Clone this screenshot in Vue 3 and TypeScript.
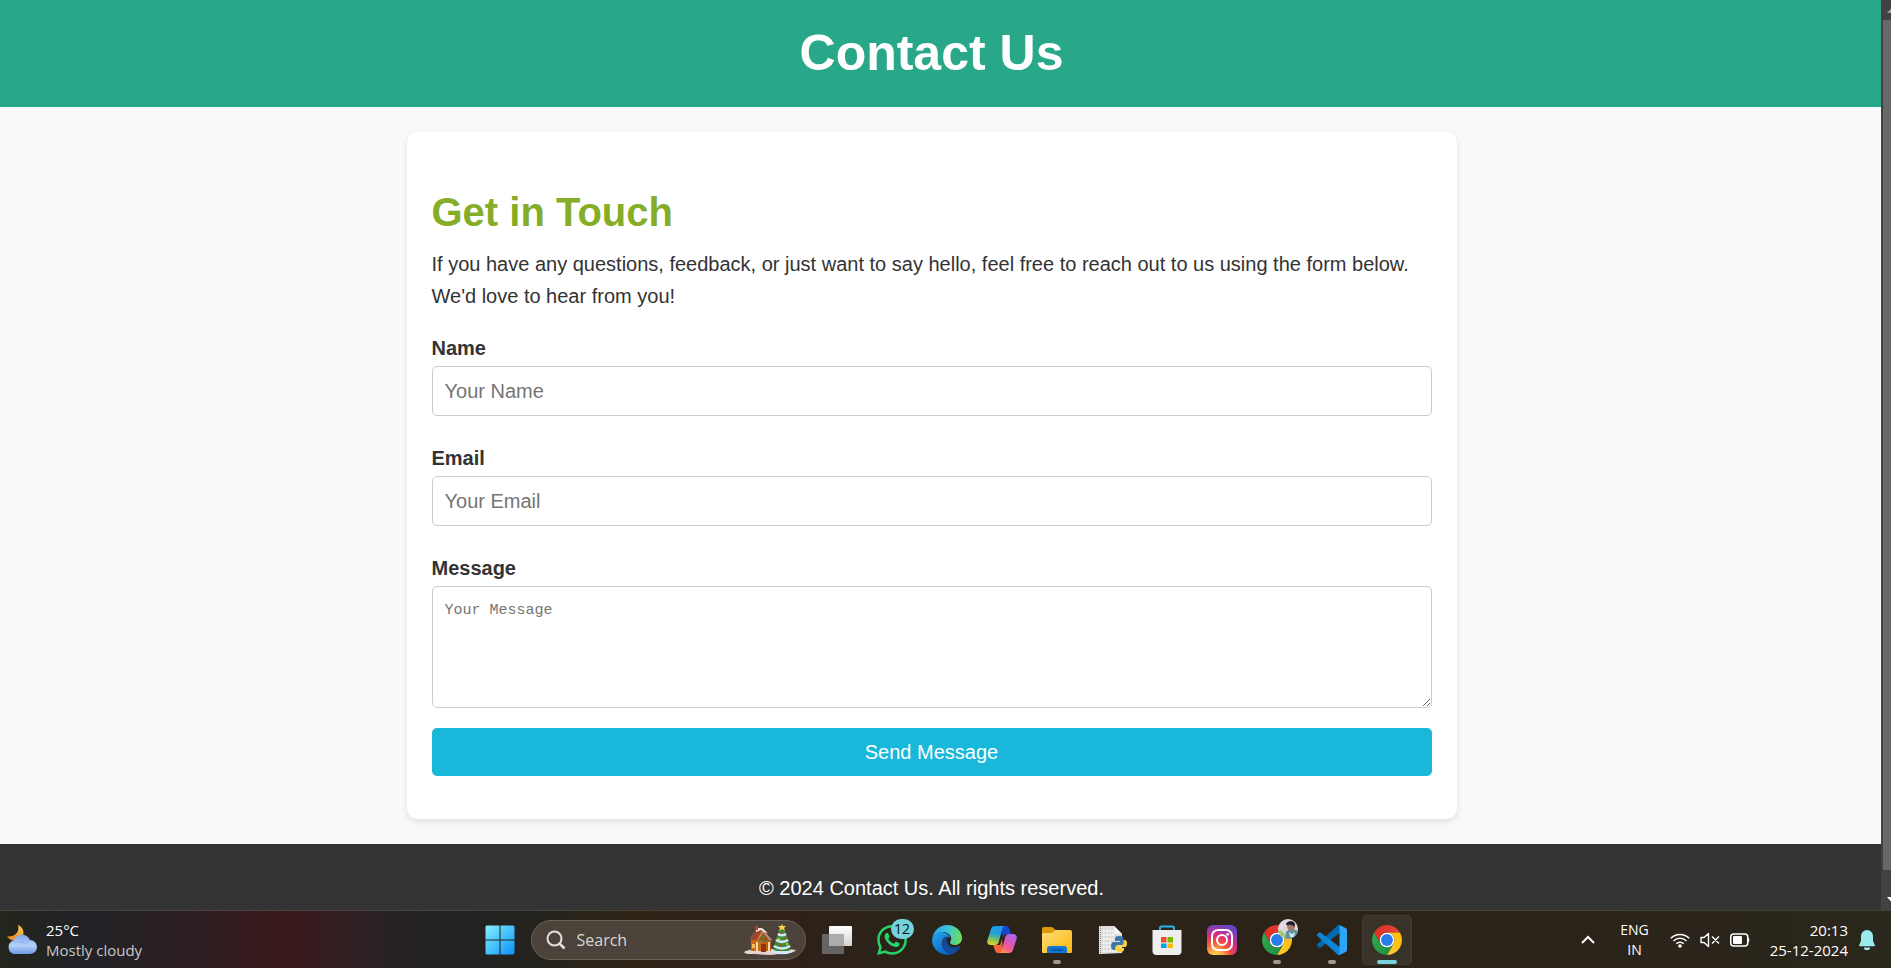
<script setup lang="ts">
import { ref } from 'vue'

const name = ref('')
const email = ref('')
const message = ref('')
const query = ref('')
</script>

<template>
  <div class="desktop">
    <div class="browser">
      <div class="page">
        <header class="page-header">
          <h1>Contact Us</h1>
        </header>

        <main class="content">
          <section class="card">
            <h2>Get in Touch</h2>
            <p class="intro">
              If you have any questions, feedback, or just want to say hello, feel free to reach out to us using the form
              below. We'd love to hear from you!
            </p>
            <form @submit.prevent>
              <div class="field">
                <label for="name">Name</label>
                <input id="name" v-model="name" type="text" placeholder="Your Name" />
              </div>
              <div class="field">
                <label for="email">Email</label>
                <input id="email" v-model="email" type="email" placeholder="Your Email" />
              </div>
              <div class="field">
                <label for="message">Message</label>
                <textarea id="message" v-model="message" placeholder="Your Message"></textarea>
              </div>
              <button class="send" type="submit">Send Message</button>
            </form>
          </section>
        </main>

        <footer class="page-footer">
          <p>© 2024 Contact Us. All rights reserved.</p>
        </footer>
      </div>

      <div class="scrollbar" aria-hidden="true">
        <svg class="arrow" viewBox="0 0 10 20"><path d="M10 8.5v4.500H6z" fill="#9a9a9a" /></svg>
        <div class="thumb"></div>
        <svg class="arrow" viewBox="0 0 10 20"><path d="M6 7h4v4.500z" fill="#fff" /></svg>
      </div>
    </div>

    <nav class="taskbar" aria-label="Taskbar">
      <button class="weather" type="button">
        <svg width="32" height="32" viewBox="0 0 32 32" aria-hidden="true">
          <defs>
            <linearGradient id="moon" x1="1" y1="0" x2="0" y2="1">
              <stop offset="0" stop-color="#f8ce4c" /><stop offset="1" stop-color="#ee7a1b" />
            </linearGradient>
            <linearGradient id="cloud" x1="0" y1="0" x2="0" y2="1">
              <stop offset="0" stop-color="#7fa6ea" /><stop offset=".55" stop-color="#b4cff8" />
              <stop offset="1" stop-color="#6c9ae8" />
            </linearGradient>
          </defs>
          <path d="M12 1c6 2.500 7 9 3.500 13-4 4.500-11 3.500-14.500-1.500C9 13 14 8 12 1z" fill="url(#moon)" />
          <path d="M8 30a7 7 0 0 1-.5-13.500A9 9 0 0 1 24 16a7 7 0 0 1 0 14z" fill="url(#cloud)" />
          <path d="M12.500 18.500c4-1 6 .5 7 2 1-2 3-3.500 5.500-3.500" fill="none" stroke="#8db2f0" />
        </svg>
        <span class="lines"><span class="bright">25°C</span><span>Mostly cloudy</span></span>
      </button>

      <div class="apps">
        <button class="app" type="button" aria-label="Start">
          <svg width="30" height="30" viewBox="0 0 30 30">
            <defs>
              <linearGradient id="win" x1="0" y1="0" x2="1" y2="1">
                <stop offset="0" stop-color="#86f0ff" /><stop offset=".5" stop-color="#46c2fa" />
                <stop offset="1" stop-color="#0a90fa" />
              </linearGradient>
            </defs>
            <path
              d="M2 .5h12.500v14H.5V2A1.500 1.500 0 0 1 2 .5zM15.500.5H28A1.500 1.500 0 0 1 29.500 2v12.500h-14zM.5 15.500h14v14H2A1.500 1.500 0 0 1 .5 28zM15.500 15.500h14V28a1.500 1.500 0 0 1-1.500 1.500H15.500z"
              fill="url(#win)"
            />
          </svg>
        </button>

        <label class="search">
          <svg width="20" height="20" viewBox="0 0 20 20" fill="none" stroke="#e2e0de" stroke-width="2">
            <circle cx="8.500" cy="8.500" r="7" /><path d="M13.500 13.500 18.500 18.500" stroke-width="2.500" />
          </svg>
          <input v-model="query" type="search" placeholder="Search" aria-label="Search" />
          <svg width="54" height="32" viewBox="0 0 54 32" aria-hidden="true">
            <path d="M1 28c5-3 9-2 12-3h25c5 1 10 0 15 1-2 4-13 2-18 4-8 2-18 0-25 0-5 0-8 0-9-2z" fill="#e6d3d1" />
            <path d="M8 14 18 4l10 11v12H8z" fill="#a8480f" />
            <path d="M8 16h11v11H8z" fill="#cc6a18" />
            <path d="M19 17h9v10h-9z" fill="#c05c14" />
            <path d="M6 15 14 4l4 1-8 11z" fill="#8a4a3c" />
            <path d="M14 16 20 5l9 11-2 1-7-8-5 8z" fill="#b98779" />
            <path d="m13 4 6 0 6 5-4-1-3-2-5 2z" fill="#f2e3df" />
            <path d="M12 2h3v4h-3z" fill="#c8371d" />
            <path d="M20 11v4m-2-2h4M15 17h12" stroke="#369154" stroke-width="1" />
            <path d="M14 18v10m12-10v10" stroke="#f5d9b6" stroke-width="2" />
            <path d="M18 20h5v8h-5z" fill="#8a3a0d" />
            <path d="M9 20h3v4H9z" fill="#ffba54" />
            <path d="m39 3 5 7-1 1 3 5-1 1 3 6-1 1 1 3H30l1-3-1-1 3-6-1-1 3-5-1-1z" fill="#3c8b3a" />
            <path d="M35 10c3 2 5 2 8 0M33 16c4 2.500 8 2.500 12 0M31 22c5 3 11 3 16 0M29 27c6 2.500 14 2.500 20 0" fill="none" stroke="#d8e6fa" stroke-width="2.500" />
            <path d="m39 0 1 2h3l-2 2 1 3-3-2-3 2 1-3-2-2h3z" fill="#ffd04a" />
            <circle cx="38" cy="9" r="1" fill="#e5352b" /><circle cx="42" cy="14" r="1" fill="#e5352b" />
            <circle cx="36" cy="15" r="1" fill="#ffcf3d" /><circle cx="37" cy="21" r="1" fill="#e5352b" />
            <circle cx="44" cy="20" r="1" fill="#ffcf3d" />
          </svg>
        </label>

        <div class="tasks">
          <button class="app" type="button" aria-label="Task view">
            <svg width="30" height="30" viewBox="0 0 30 30">
              <defs>
                <linearGradient id="tv" x1="0" y1="0" x2="0" y2="1">
                  <stop offset="0" stop-color="#fff" /><stop offset="1" stop-color="#d2d2d2" />
                </linearGradient>
              </defs>
              <rect y="9" width="22" height="20" rx="1" fill="#666462" />
              <rect x="7" y="1" width="23" height="20" rx="1" fill="url(#tv)" />
              <path d="M7 9h15v12H8a1 1 0 0 1-1-1z" fill="#acacac" />
            </svg>
          </button>

          <button class="app" type="button" aria-label="WhatsApp, 12 notifications">
            <svg width="30" height="30" viewBox="0 0 24 24">
              <path
                fill="#25d366"
                d="M17.472 14.382c-.297-.149-1.758-.867-2.03-.967-.273-.099-.471-.148-.67.15-.197.297-.767.966-.94 1.164-.173.199-.347.223-.644.075-.297-.15-1.255-.463-2.39-1.475-.883-.788-1.480-1.761-1.653-2.059-.173-.297-.018-.458.13-.606.134-.133.298-.347.446-.52.149-.174.198-.298.298-.497.099-.198.05-.371-.025-.52-.075-.149-.669-1.612-.916-2.207-.242-.579-.487-.5-.669-.51-.173-.008-.371-.01-.57-.01-.198 0-.52.074-.792.372-.272.297-1.040 1.016-1.040 2.479 0 1.462 1.065 2.875 1.213 3.074.149.198 2.096 3.200 5.077 4.487.709.306 1.262.489 1.694.625.712.227 1.360.195 1.871.118.571-.085 1.758-.719 2.006-1.413.248-.694.248-1.289.173-1.413-.074-.124-.272-.198-.57-.347m-5.421 7.403h-.004a9.870 9.870 0 0 1-5.031-1.378l-.361-.214-3.741.982.998-3.648-.235-.374a9.860 9.860 0 0 1-1.510-5.260c.001-5.450 4.436-9.884 9.888-9.884 2.640 0 5.122 1.030 6.988 2.898a9.825 9.825 0 0 1 2.893 6.994c-.003 5.450-4.437 9.884-9.885 9.884m8.413-18.297A11.815 11.815 0 0 0 12.050 0C5.495 0 .16 5.335.157 11.892c0 2.096.547 4.142 1.588 5.945L.057 24l6.305-1.654a11.882 11.882 0 0 0 5.683 1.448h.005c6.554 0 11.890-5.335 11.893-11.893a11.821 11.821 0 0 0-3.480-8.413z"
              />
            </svg>
            <span class="badge">12</span>
          </button>

          <button class="app" type="button" aria-label="Edge">
            <svg width="30" height="30" viewBox="0 0 30 30">
              <defs>
                <linearGradient id="edgeTop" x1="0" y1=".4" x2="1" y2=".5">
                  <stop offset="0" stop-color="#2d9fe6" /><stop offset=".5" stop-color="#38c5d8" />
                  <stop offset="1" stop-color="#6fe052" />
                </linearGradient>
                <linearGradient id="edgeLeft" x1="0" y1="0" x2=".6" y2="1">
                  <stop offset="0" stop-color="#2aa5ec" /><stop offset="1" stop-color="#0968c8" />
                </linearGradient>
              </defs>
              <path
                d="M.5 12C2 5 8 0 15 0c9 0 15 6.500 15 13 0 4.500-3.500 7-7 7-3 0-5-1.200-5-2.500 0-1 1.200-1.500 1.200-4C19 9 14 6.500 9.500 7 5 7.500 2 9.500.5 12z"
                fill="url(#edgeTop)"
              />
              <path
                d="M0 15C.5 9 5 6.500 10 7c4 .4 7.500 3 8.500 6-2-2-6.500-2-8 2-2 6 2 12.500 9.500 14C10 32 0 25 0 15z"
                fill="url(#edgeLeft)"
              />
              <path
                d="M10.500 15c1-2.500 3-3.500 5.500-3-2 2-2 5 0 7.500 3 3.500 7.500 3.500 11.500 1.500 1 0 1.200.6.8 1.200C25.500 27 22 29 19 29.500 13 28.500 8.500 21.500 10.500 15z"
                fill="#114a96"
              />
            </svg>
          </button>

          <button class="app" type="button" aria-label="Copilot">
            <svg width="30" height="30" viewBox="0 0 30 30">
              <defs>
                <linearGradient id="copA" x1=".4" y1="0" x2=".2" y2="1">
                  <stop offset="0" stop-color="#1998ee" /><stop offset=".4" stop-color="#22a5d8" />
                  <stop offset=".7" stop-color="#7cc45a" /><stop offset="1" stop-color="#f5d02c" />
                </linearGradient>
                <linearGradient id="copB" x1=".8" y1="0" x2=".2" y2="1">
                  <stop offset="0" stop-color="#a56bf0" /><stop offset=".45" stop-color="#dd55b8" />
                  <stop offset=".75" stop-color="#fa6080" /><stop offset="1" stop-color="#ff9c58" />
                </linearGradient>
              </defs>
              <path d="M14 1h5c2 0 3 1 3.500 3L24 9h-4c-3 0-3 2-4 4z" fill="#1747d0" />
              <path d="M6 20h7l2-6 1 14h-5c-2 0-2.500-1-3-3z" fill="#f4643a" />
              <path
                d="M8 1h10c-2 .5-2.600 2-3 4l-3 11c-.6 2.500-1.500 4-4 4H4c-3 0-4.500-2-3.500-5L4 4c.6-2 2-3 4-3z"
                fill="url(#copA)"
              />
              <path
                d="M22 28H12c2-.5 2.600-2 3-4l3-11c.6-2.500 1.500-4 4-4h4c3 0 4.500 2 3.500 5L26 25c-.6 2-2 3-4 3z"
                fill="url(#copB)"
              />
            </svg>
          </button>

          <button class="app" type="button" aria-label="File Explorer">
            <svg width="30" height="30" viewBox="0 0 30 30">
              <defs>
                <linearGradient id="folder" x1="0" y1="0" x2="1" y2="1">
                  <stop offset="0" stop-color="#ffde7a" /><stop offset="1" stop-color="#f9b80a" />
                </linearGradient>
              </defs>
              <path d="M0 4a2 2 0 0 1 2-2h7q1.500 0 2.500 1l2 2v6H0z" fill="#dd9a08" />
              <path d="M0 8h9q1.500 0 2.500-1L13 5h15a2 2 0 0 1 2 2v20a1 1 0 0 1-1 1H1a1 1 0 0 1-1-1z" fill="url(#folder)" />
              <path d="M5 28v-4a3 3 0 0 1 3-3h14a3 3 0 0 1 3 3v4z" fill="#1177d2" />
              <path d="M9 25h12" stroke="#0b4d96" stroke-width="1.500" />
            </svg>
            <span class="mark"></span>
          </button>

          <button class="app" type="button" aria-label="Python">
            <svg width="30" height="30" viewBox="0 0 30 30">
              <path d="M2 1h15l8 8v19l-21 1H2z" fill="#dedede" />
              <path d="M17 1v8h8z" fill="#f7f7f7" />
              <path d="M3.500 1v28" stroke="#888" stroke-dasharray="1 1" />
              <path d="M6 6h10M6 10h12M6 14h10M6 18h8M6 22h10M6 26h14" stroke="#f6f6f6" stroke-width="2" stroke-dasharray="2 1" />
              <path
                d="M22 11c-3 0-4 1-4 2.500V16h5v1h-6c-2 0-3 1.500-3 4s1 4 3 4h1.500v-2.500c0-1.500 1-2.500 3-2.500H25c1 0 1.500-1 1.500-2v-4.500C26.500 12 25 11 22 11z"
                fill="#3b79ad"
              />
              <path
                d="M23 27c3 0 4-1 4-2.500V23h-5v-1h6c1 0 2-1 2-3.500S29 15 27.500 15H26.500v2.500c0 1.500-1 3-3 3H20c-1 0-1.500 1-1.500 2v2c0 1.500 1.500 2.500 4.500 2.500z"
                fill="#ffd23f"
              />
            </svg>
          </button>

          <button class="app" type="button" aria-label="Microsoft Store">
            <svg width="30" height="30" viewBox="0 0 30 30">
              <path d="M8 7V3a1.500 1.500 0 0 1 1.500-1.500h11A1.500 1.500 0 0 1 22 3v4" fill="none" stroke="#27b4ee" stroke-width="2" />
              <path d="M.5 5h29v21a4 4 0 0 1-4 4h-21a4 4 0 0 1-4-4z" fill="#eee" />
              <path d="M9 12h5.500v5.500H9z" fill="#f04f22" /><path d="M15.500 12H21v5.500h-5.500z" fill="#7eb900" />
              <path d="M9 18.500h5.500V23H9z" fill="#00a3ee" /><path d="M15.500 18.500H21V23h-5.500z" fill="#ffb800" />
            </svg>
          </button>

          <button class="app" type="button" aria-label="Instagram">
            <svg width="30" height="30" viewBox="0 0 30 30">
              <defs>
                <radialGradient id="ig" cx=".28" cy="1.050" r="1.100">
                  <stop offset="0" stop-color="#ffdc60" /><stop offset=".2" stop-color="#fcaf45" />
                  <stop offset=".45" stop-color="#f4503c" /><stop offset=".68" stop-color="#cf2d87" />
                  <stop offset="1" stop-color="#6047c8" />
                </radialGradient>
              </defs>
              <rect width="30" height="30" rx="6" fill="url(#ig)" />
              <g fill="none" stroke="#fff" stroke-width="2">
                <rect x="5" y="5" width="20" height="20" rx="6" /><circle cx="15" cy="15" r="5" />
              </g>
              <circle cx="20.700" cy="9.300" r="1.400" fill="#fff" />
            </svg>
          </button>

          <button class="app" type="button" aria-label="Chrome, personal profile">
            <svg width="30" height="30" viewBox="0 0 48 48">
              <defs>
                <linearGradient id="crR" x1="0" y1="0" x2="1" y2="0">
                  <stop offset="0" stop-color="#d93025" /><stop offset="1" stop-color="#ea4335" />
                </linearGradient>
                <linearGradient id="crY" x1="0" y1="1" x2="1" y2="0">
                  <stop offset="0" stop-color="#fcc934" /><stop offset="1" stop-color="#fbbc04" />
                </linearGradient>
                <linearGradient id="crG" x1="1" y1="1" x2="0" y2="0">
                  <stop offset="0" stop-color="#1e8e3e" /><stop offset="1" stop-color="#34a853" />
                </linearGradient>
                <symbol id="chrome" viewBox="0 0 48 48">
                  <circle cx="24" cy="24" r="12" fill="#fff" />
                  <path d="M24 12h20.780a24 24 0 0 0-41.560 0l10.390 18A12 12 0 0 1 24 12z" fill="url(#crR)" />
                  <path d="M34.390 30 24 48a24 24 0 0 0 20.780-36H24a12 12 0 0 1 10.390 18z" fill="url(#crY)" />
                  <path d="M13.610 30 3.220 12A24 24 0 0 0 24 48l10.390-18a12 12 0 0 1-20.780 0z" fill="url(#crG)" />
                  <circle cx="24" cy="24" r="9.500" fill="#2a7bea" />
                </symbol>
              </defs>
              <use href="#chrome" width="48" height="48" />
            </svg>
            <svg class="avatar" width="20" height="20" viewBox="0 0 20 20">
              <clipPath id="face"><circle cx="10" cy="10" r="10" /></clipPath>
              <g clip-path="url(#face)">
                <path d="M0 0h20v20H0z" fill="#dcd9df" />
                <path d="M0 11c4 0 7 2 8 9H0z" fill="#a9c86f" />
                <path d="M8 13c2-3 9-4 12 0v7H7z" fill="#5d93a5" />
                <ellipse cx="13" cy="7" rx="4" ry="5" fill="#a8766a" />
                <path d="M8 6c0-5 9-5 9 0l-1 2c-1-3-4-2-7-2z" fill="#1d1c2c" />
                <path d="m11 13 3 2 3-2-1 5h-4z" fill="#d6e3e4" />
              </g>
            </svg>
            <span class="mark"></span>
          </button>

          <button class="app" type="button" aria-label="Visual Studio Code">
            <svg width="30" height="30" viewBox="0 0 100 100">
              <path
                d="M96.460 10.800 75.860.87a6.230 6.230 0 0 0-7.100 1.200L1.300 63.600a4.170 4.170 0 0 0 0 6.160l5.500 5a4.170 4.170 0 0 0 5.330.24L93.360 13.400c2.720-2.060 6.640-.12 6.640 3.300v-.24a6.250 6.250 0 0 0-3.540-5.630z"
                fill="#0069b0"
              />
              <path
                d="m96.460 89.200-20.600 9.930a6.230 6.230 0 0 1-7.100-1.200L1.300 36.400a4.170 4.170 0 0 1 0-6.160l5.500-5a4.170 4.170 0 0 1 5.330-.24l81.230 61.600c2.720 2.060 6.640.12 6.640-3.300v.24a6.250 6.250 0 0 1-3.540 5.630z"
                fill="#0d85d4"
              />
              <path
                d="M75.860 99.130a6.230 6.230 0 0 1-7.100-1.200c2.300 2.300 6.240.67 6.240-2.580V4.660c0-3.260-3.940-4.900-6.240-2.590a6.230 6.230 0 0 1 7.100-1.200l20.600 9.900A6.250 6.250 0 0 1 100 16.400v67.200c0 2.400-1.370 4.600-3.540 5.640z"
                fill="#2aa6f4"
              />
            </svg>
            <span class="mark"></span>
          </button>

          <button class="app active" type="button" aria-label="Chrome">
            <svg width="30" height="30" viewBox="0 0 48 48"><use href="#chrome" width="48" height="48" /></svg>
            <span class="mark"></span>
          </button>
        </div>
      </div>

      <div class="tray">
        <button class="chevron" type="button" aria-label="Show hidden icons">
          <svg width="16" height="10" viewBox="0 0 16 10" fill="none" stroke="#fff" stroke-width="2">
            <path d="m2 8 6-6 6 6" />
          </svg>
        </button>
        <button class="lines lang" type="button"><span>ENG</span><span>IN</span></button>
        <button class="status" type="button" aria-label="Network, sound and battery">
          <svg width="20" height="16" viewBox="0 0 20 16" fill="none" stroke="#fff" stroke-width="1.500">
            <path d="M.8 6.200a13 13 0 0 1 18.400 0M3.500 9a9.200 9.200 0 0 1 13 0M6.300 11.700a5.200 5.200 0 0 1 7.400 0" />
            <circle cx="10" cy="14" r="1.800" fill="#fff" stroke="none" />
          </svg>
          <svg width="20" height="16" viewBox="0 0 20 16" fill="none" stroke="#fff" stroke-width="1.400">
            <path d="M1 5.500h3L8.500 1.500v13L4 10.500H1zM12 4.500l7 7M19 4.500l-7 7" stroke-linejoin="round" />
          </svg>
          <svg width="20" height="16" viewBox="0 0 20 16">
            <rect x=".75" y="2" width="17" height="12" rx="3" fill="none" stroke="#fff" stroke-width="1.500" />
            <rect x="3" y="4" width="9" height="8" rx="1" fill="#fff" /><path d="M18 6q2 2 0 4z" fill="#fff" stroke="#fff" />
          </svg>
        </button>
        <button class="lines clock" type="button"><span>20:13</span><span>25-12-2024</span></button>
        <button class="bell" type="button" aria-label="Notifications">
          <svg width="16" height="20" viewBox="0 0 16 20" fill="#99ebed">
            <path d="M8 0a6 6 0 0 1 6 6v5l2 4.500q0 .8-.8.8H.8q-.8 0-.8-.8L2 11V6a6 6 0 0 1 6-6zM5 17.500h6a3 3 0 0 1-6 0z" />
          </svg>
        </button>
      </div>
    </nav>
  </div>
</template>

<style>
body {
  margin: 0;
}
</style>

<style scoped>
* {
  box-sizing: border-box;
}

.desktop {
  display: flex;
  flex-direction: column;
  height: 100vh;
  overflow: hidden;
  font: 20px/32px 'Liberation Sans', Arial, sans-serif;
  color: #333;
}

.browser {
  display: flex;
  flex: 1;
  min-height: 0;
  background: #f8f9fb;
}

.page {
  flex: 1;
  min-width: 0;
  overflow: hidden;
}

h1,
h2,
p {
  margin: 0;
}

.page-header,
.content,
.page-footer {
  padding-right: 18px;
}

.page-header,
.page-footer {
  text-align: center;
  color: #fff;
}

.page-header {
  padding-top: 13px;
  padding-bottom: 14px;
  background: #28a789;
}

h1 {
  font-size: 50px;
  line-height: 80px;
}

.content {
  padding-top: 25px;
  padding-bottom: 25px;
}

.card {
  max-width: 1050px;
  margin: 0 auto;
  padding: 50px 25px 43px;
  background: #fff;
  border-radius: 10px;
  box-shadow: 0 3px 6px rgba(0, 0, 0, 0.1);
}

h2 {
  margin-bottom: 6px;
  font-size: 40px;
  line-height: 60px;
  color: #86ad27;
}

form {
  display: flex;
  flex-direction: column;
  gap: 26px;
  margin-top: 20px;
}

.field {
  display: flex;
  flex-direction: column;
  gap: 2px;
}

.field label {
  font-weight: bold;
}

.field input,
.field textarea {
  width: 100%;
  padding: 12px;
  border: 1px solid #ccc;
  border-radius: 5px;
  background: #fff;
  font: inherit;
  color: #333;
}

.field input {
  height: 50px;
}

.field textarea {
  height: 122px;
  font: 15px/24px 'Liberation Mono', monospace;
}

.field ::placeholder {
  color: #757575;
}

.send {
  height: 48px;
  margin-top: -6px;
  border: 0;
  border-radius: 5px;
  background: #19b7d9;
  color: #fff;
  font: inherit;
}

.page-footer {
  padding-top: 28px;
  padding-bottom: 28px;
  background: #333;
}

.scrollbar {
  display: flex;
  flex-direction: column;
  flex: 0 0 10px;
  background: #424242;
}

.arrow {
  width: 10px;
  height: 20px;
}

.thumb {
  flex: 1;
  margin: 0 0 20px 2px;
  background: #686868;
}

.taskbar {
  display: grid;
  grid-template-columns: 1fr auto 1fr;
  align-items: center;
  height: 58px;
  border-top: 1px solid #45413a;
  background: linear-gradient(
    90deg,
    #24251c 0,
    #202226 4%,
    #2c1f22 10%,
    #3b191b 15%,
    #2c2022 19%,
    #222325 23%,
    #22221f 27%,
    #2d2417 33%,
    #2f2019 42%,
    #2b2419 47%,
    #2b2218 80%,
    #2a271d 100%
  );
  font: 15px/20px 'Open Sans', 'Noto Sans', sans-serif;
  color: #fff;
}

.taskbar button {
  padding: 0;
  border: 0;
  background: none;
  font: inherit;
  color: inherit;
}

.taskbar svg {
  display: block;
}

.taskbar .weather {
  display: flex;
  align-items: center;
  gap: 8px;
  padding-left: 6px;
  text-align: left;
  color: #c9c7c8;
}

.bright {
  color: #fff;
}

.lines {
  display: flex;
  flex-direction: column;
}

.apps,
.tasks {
  display: flex;
  align-items: center;
  gap: 5px;
}

.apps {
  gap: 6px;
  padding-right: 5px;
}

.taskbar .app {
  position: relative;
  display: grid;
  place-items: center;
  width: 50px;
  height: 50px;
  border-radius: 5px;
}

.taskbar .app.active {
  background: #393228;
  box-shadow: inset 0 0 0 1px #423b31;
}

.mark {
  position: absolute;
  left: 21px;
  bottom: 1px;
  width: 8px;
  height: 4px;
  border-radius: 2px;
  background: #9c978f;
}

.active .mark {
  left: 15px;
  width: 20px;
  background: #76d2d8;
}

.badge {
  position: absolute;
  top: 4px;
  right: 3px;
  width: 23px;
  height: 20px;
  border-radius: 10px;
  background: #72d3d9;
  color: #101010;
  font-size: 14px;
  text-align: center;
}

.avatar {
  position: absolute;
  top: 4px;
  right: 4px;
}

.search {
  display: flex;
  align-items: center;
  width: 275px;
  height: 40px;
  padding: 0 8px 0 14px;
  border: 1px solid #6a6258;
  border-radius: 20px;
  background: #4b4339;
}

.search input {
  flex: 1;
  min-width: 0;
  padding: 0 11px;
  border: 0;
  background: none;
  font: inherit;
  font-size: 16px;
  color: #fff;
}

.search input::placeholder {
  color: #dad7d4;
}

.tray {
  display: flex;
  align-items: center;
  justify-content: flex-end;
  padding-right: 16px;
}

.chevron {
  margin-right: 24px;
}

.taskbar .lang {
  align-items: center;
  margin-right: 21px;
  font-size: 14px;
}

.status {
  display: flex;
  gap: 10px;
  margin-right: 20px;
}

.taskbar .clock {
  align-items: flex-end;
  margin-right: 11px;
}
</style>
